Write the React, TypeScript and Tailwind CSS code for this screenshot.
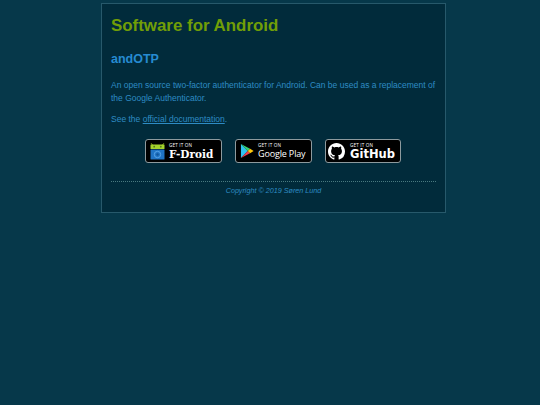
import React from "react";

function Badge({
  icon,
  label,
  labelClass,
  rowClass,
  width,
}: {
  icon: React.ReactNode;
  label: string;
  labelClass: string;
  rowClass: string;
  width: string;
}) {
  return (
    <a className={`flex h-6 items-center rounded-[3px] border border-[#8d9a9e] bg-black ${width} ${rowClass}`}>
      {icon}
      <div className="flex flex-col text-white">
        <span className="whitespace-nowrap font-['Open_Sans',sans-serif] text-[4.6px] leading-[6px] tracking-[0.15px]">GET IT ON</span>
        <span className={labelClass}>{label}</span>
      </div>
    </a>
  );
}

const FDroidIcon = (
  <svg width="15" height="17" viewBox="0 0 15 17" className="shrink-0">
    <path d="M0.8 0.3 L2.8 2 M14.2 0.3 L12.2 2" stroke="#a4d22c" strokeWidth="0.8" />
    <rect x="0.5" y="1.5" width="14" height="4.5" rx="0.5" fill="#a4d22c" />
    <circle cx="4.2" cy="3.7" r="0.9" fill="#55771a" />
    <circle cx="10.8" cy="3.7" r="0.9" fill="#55771a" />
    <rect x="0.5" y="6.5" width="14" height="10" rx="0.5" fill="#1f73c4" />
    <circle cx="7.5" cy="11.5" r="3.2" fill="none" stroke="#5ba6e8" strokeWidth="0.9" />
    <circle cx="7.5" cy="11.5" r="1.2" fill="#12579c" />
  </svg>
);

const PlayIcon = (
  <svg width="14" height="16" viewBox="0 0 15 16" className="shrink-0">
    <path d="M1 0.6 L1 15.4 L8.3 8 Z" fill="#2fc2f0" />
    <path d="M1 0.6 L8.3 8 L10.8 5.5 Z" fill="#35d074" />
    <path d="M1 15.4 L8.3 8 L10.8 10.5 Z" fill="#ee3d4a" />
    <path d="M10.8 5.5 L14.6 8 L10.8 10.5 L8.3 8 Z" fill="#fdc70c" />
  </svg>
);

const GitHubIcon = (
  <svg width="17" height="17" viewBox="0 0 16 16" fill="#fff" className="shrink-0">
    <path d="M8 0C3.58 0 0 3.58 0 8c0 3.54 2.29 6.53 5.47 7.59.4.07.55-.17.55-.38 0-.19-.01-.82-.01-1.49-2.01.37-2.53-.49-2.69-.94-.09-.23-.48-.94-.82-1.13-.28-.15-.68-.52-.01-.53.63-.01 1.08.58 1.23.82.72 1.21 1.87.87 2.33.66.07-.52.28-.87.51-1.07-1.78-.2-3.64-.89-3.64-3.95 0-.87.31-1.59.82-2.15-.08-.2-.36-1.02.08-2.12 0 0 .67-.21 2.2.82.64-.18 1.32-.27 2-.27s1.36.09 2 .27c1.53-1.04 2.2-.82 2.2-.82.44 1.1.16 1.92.08 2.12.51.56.82 1.27.82 2.15 0 3.07-1.87 3.75-3.65 3.95.29.25.54.73.54 1.48 0 1.07-.01 1.93-.01 2.2 0 .21.15.46.55.38A8.01 8.01 0 0 0 16 8c0-4.42-3.58-8-8-8z" />
  </svg>
);

export default function App() {
  return (
    <div className="min-h-[405px] bg-[#06384a] pt-[3px] font-['Liberation_Sans',Arial,sans-serif] text-[8.5px] leading-[13px] text-[#2e8cc4]">
      <div className="ml-[101px] h-[210px] w-[345px] border border-[#27596b] bg-[#012b3b] px-[9px] pt-[11px]">
        <h1 className="text-[16.9px] font-bold leading-[22px] text-[#719e07]">Software for Android</h1>
        <h2 className="mt-[15px] text-[12.5px] font-bold leading-[15px] text-[#268bd2]">andOTP</h2>
        <p className="mt-[12px]">
          An open source two-factor authenticator for Android. Can be used as a replacement of the Google Authenticator.
        </p>
        <p className="mt-2">
          See the <a className="underline">official documentation</a>.
        </p>
        <div className="mt-[13px] flex gap-[13px] pl-[34px]">
          <Badge
            width="w-[77px]"
            rowClass="gap-1 pl-1"
            icon={FDroidIcon}
            label="F-Droid"
            labelClass="font-['DejaVu_Serif',serif] text-[10.5px] font-bold leading-[12px]"
          />
          <Badge
            width="w-[77px]"
            rowClass="gap-1 pl-1"
            icon={PlayIcon}
            label="Google Play"
            labelClass="whitespace-nowrap font-['Open_Sans',sans-serif] text-[9px] leading-[12px] tracking-[-0.15px]"
          />
          <Badge
            width="w-[76px]"
            rowClass="gap-[5px] pl-[2px]"
            icon={GitHubIcon}
            label="GitHub"
            labelClass="font-['DejaVu_Sans',sans-serif] text-[11.5px] font-bold leading-[12px]"
          />
        </div>
        <hr className="mt-[18px] border-0 border-t border-dotted border-[#4a7a80]" />
        <p className="mt-[2px] text-center text-[7.2px] italic">Copyright © 2019 Søren Lund</p>
      </div>
    </div>
  );
}
